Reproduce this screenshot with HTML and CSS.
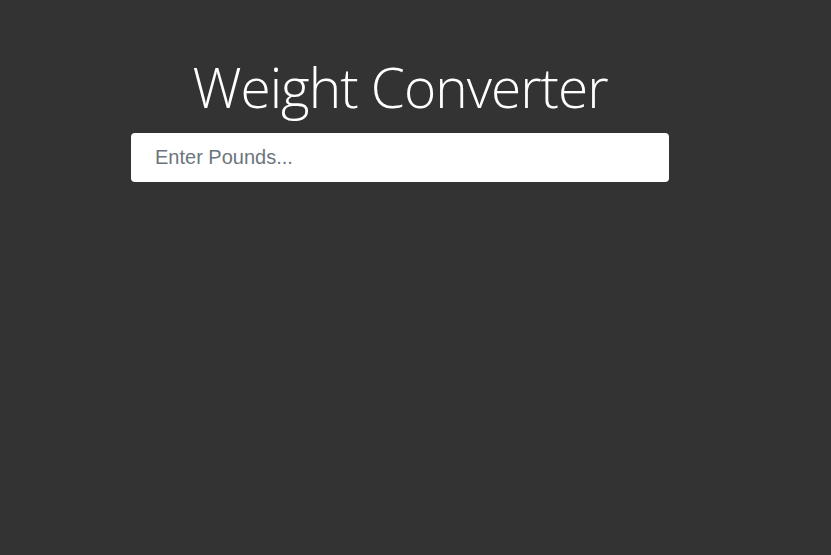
FILE: index.html
```html
<!DOCTYPE html>
<html>
<head>
<meta charset="utf-8">
<title>Weight Converter</title>
<link rel="stylesheet" href="styles.css">
</head>
<body>
<main class="app">
  <h1 class="title">Weight Converter</h1>
  <input class="pounds" type="number" placeholder="Enter Pounds...">
</main>
</body>
</html>
```
FILE: styles.css
```css
html, body {
  margin: 0;
  padding: 0;
  background: #333333;
  height: 100%;
}
.app {
  width: 538px;
  margin-left: 131px;
  padding-top: 51px;
  display: flex;
  flex-direction: column;
}
.title {
  margin: 0 0 10px;
  text-align: center;
  color: #ffffff;
  font-family: "Open Sans", "Noto Sans", sans-serif;
  font-weight: 300;
  font-size: 55px;
  line-height: 72px;
  letter-spacing: -1px;
}
.pounds {
  box-sizing: border-box;
  width: 538px;
  height: 49px;
  border: none;
  border-radius: 4px;
  background: #ffffff;
  padding: 0 24px;
  font-family: "Liberation Sans", Arial, sans-serif;
  font-size: 20px;
  color: #495057;
  outline: none;
}
.pounds::placeholder {
  color: #6c757d;
}
```
